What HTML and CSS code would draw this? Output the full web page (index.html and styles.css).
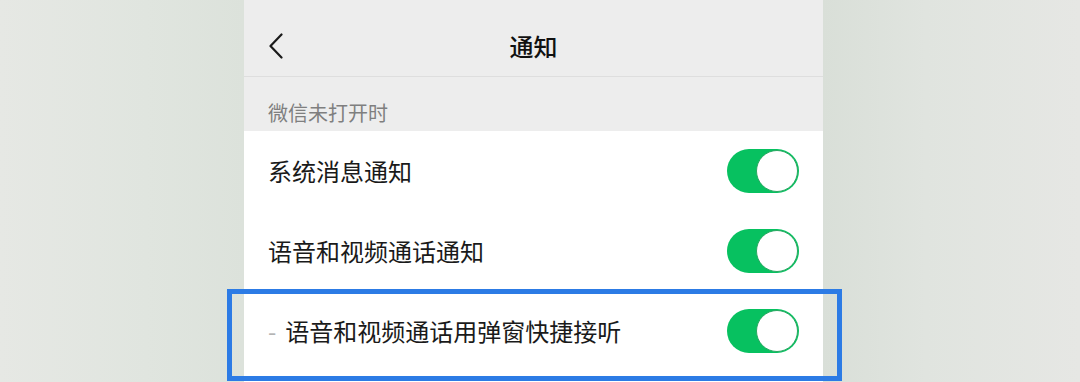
FILE: index.html
```html
<!DOCTYPE html>
<html lang="zh-CN">
<head>
    <meta charset="UTF-8">
    <meta name="viewport" content="width=device-width, initial-scale=1.0">
    <title>通知</title>
    <link rel="stylesheet" href="styles.css">
</head>
<body>
    <div class="stage">
        <div class="side left"></div>

        <div class="phone">
            <div class="nav">
                <span class="back">
                    <svg width="16" height="26" viewBox="0 0 16 26">
                        <path d="M13.5 1.5 L2.5 13 L13.5 24.5" fill="none" stroke="#1a1a1a" stroke-width="2.2" stroke-linecap="round" stroke-linejoin="round"/>
                    </svg>
                </span>
                <span class="title">通知</span>
            </div>

            <div class="section-label">微信未打开时</div>

            <div class="list">
                <div class="row">
                    <span class="row-text">系统消息通知</span>
                    <span class="switch on"><span class="knob"></span></span>
                </div>
                <div class="row">
                    <span class="row-text">语音和视频通话通知</span>
                    <span class="switch on"><span class="knob"></span></span>
                </div>
                <div class="row">
                    <span class="row-text"><span class="dash">-</span>语音和视频通话用弹窗快捷接听</span>
                    <span class="switch on"><span class="knob"></span></span>
                </div>
            </div>
        </div>

        <div class="side right"></div>

        <!-- 标注框 -->
        <div class="highlight"></div>
    </div>
</body>
</html>
```

FILE: styles.css
```css
* {
    margin: 0;
    padding: 0;
    box-sizing: border-box;
}

body {
    font-family: "Noto Sans CJK SC", "Noto Sans", sans-serif;
    color: #1a1a1a;
    width: 1080px;
    height: 382px;
    overflow: hidden;
}

.stage {
    position: relative;
    display: flex;
    height: 382px;
}

.side.left {
    width: 244px;
    background: linear-gradient(90deg, #e6e8e4 0%, #e0e5df 60%, #dce2db 100%);
}

.side.right {
    flex: 1;
    background: linear-gradient(90deg, #d9dfd8 0%, #e0e4df 40%, #e6e7e4 100%);
}

.phone {
    width: 579px;
    display: flex;
    flex-direction: column;
    background: #ededed;
}

.nav {
    position: relative;
    height: 77px;
    padding-top: 16px;
    border-bottom: 1px solid #dedede;
    display: flex;
    justify-content: center;
}

.back {
    position: absolute;
    left: 24px;
    top: 33px;
    display: flex;
}

.title {
    height: 60px;
    line-height: 60px;
    font-size: 24px;
    font-weight: 500;
    color: #111;
}

.section-label {
    height: 54px;
    padding: 25px 24px 0;
    font-size: 20px;
    line-height: 22px;
    color: #7f7f7f;
}

.list {
    flex: 1;
    background: #fff;
}

.row {
    height: 80px;
    padding: 0 24px;
    display: flex;
    align-items: center;
    justify-content: space-between;
}

.row-text {
    font-size: 24px;
    line-height: 30px;
    color: #1a1a1a;
}

.dash {
    color: #b4b4b4;
    margin-right: 9px;
}

.switch {
    position: relative;
    width: 72px;
    height: 44px;
    border-radius: 22px;
    background: #e5e5e5;
}

.switch.on {
    background: #07c160;
}

.knob {
    position: absolute;
    top: 1px;
    right: 1px;
    width: 42px;
    height: 42px;
    border-radius: 50%;
    background: #fff;
    border: 1.5px solid #2aa862;
}

.highlight {
    position: absolute;
    left: 227px;
    top: 289px;
    width: 615px;
    height: 92px;
    border: 5px solid #2c7be5;
}
```
